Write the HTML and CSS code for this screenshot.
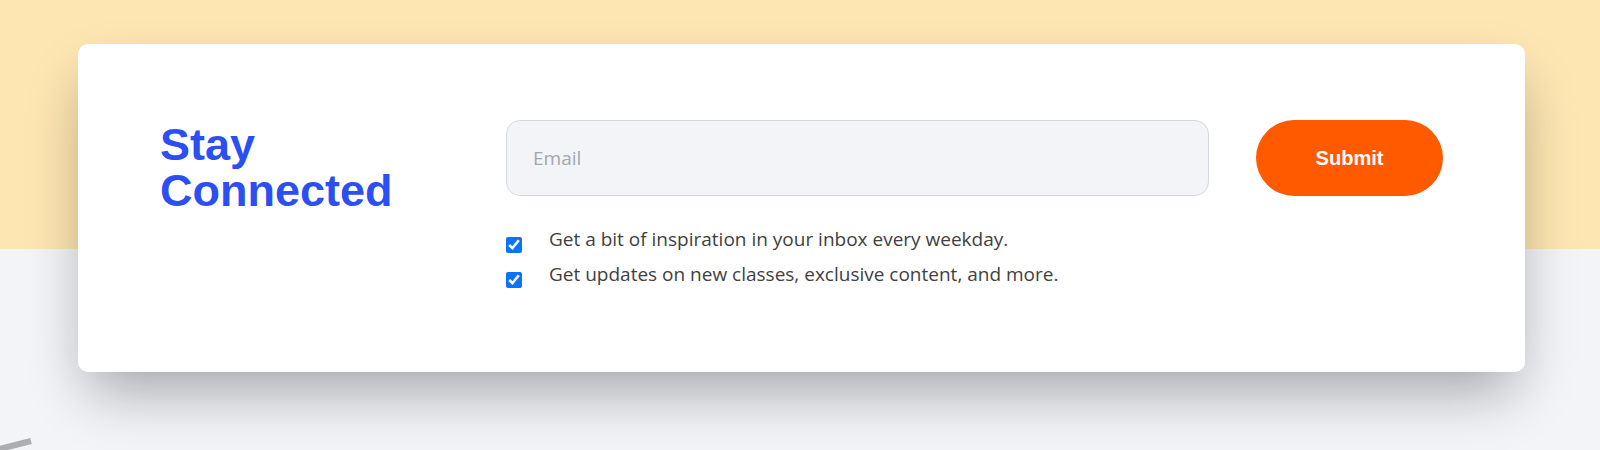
FILE: index.html
```html
<!DOCTYPE html>
<html lang="en">
<head>
<meta charset="utf-8">
<title>Stay Connected</title>
<link rel="stylesheet" href="styles.css">
</head>
<body>
  <main class="wrap">
    <section class="card">
      <h2 class="title">Stay<br>Connected</h2>
      <form class="form">
        <div class="row">
          <input class="email" type="email" placeholder="Email">
          <button class="submit" type="button">Submit</button>
        </div>
        <div class="checks">
          <label class="check"><input type="checkbox" checked><span>Get a bit of inspiration in your inbox every weekday.</span></label>
          <label class="check"><input type="checkbox" checked><span>Get updates on new classes, exclusive content, and more.</span></label>
        </div>
      </form>
    </section>
  </main>
  <svg class="deco" width="40" height="20" viewBox="0 0 40 20" aria-hidden="true">
    <path d="M-4 20 L31 11" fill="none" stroke="#acadb0" stroke-width="6" stroke-linecap="butt"/>
  </svg>
</body>
</html>
```

FILE: styles.css
```css
html, body {
  margin: 0;
  padding: 0;
}

body {
  min-height: 450px;
  background: linear-gradient(to bottom, #fde6b2 0, #fde6b2 249px, #f3f4f8 249px, #f3f4f8 100%);
  font-family: "Open Sans", "Noto Sans", sans-serif;
  overflow: hidden;
}

.wrap {
  padding: 44px 75px 0 78px;
}

.card {
  box-sizing: border-box;
  height: 328px;
  background: #ffffff;
  border-radius: 10px;
  box-shadow: 0 28px 55px -10px rgba(0, 0, 0, 0.33);
  padding: 76px 82px 0 82px;
  display: flex;
  align-items: flex-start;
}

.title {
  margin: 2px 0 0 0;
  width: 346px;
  flex: none;
  font-family: "Liberation Sans", Arial, sans-serif;
  font-weight: 700;
  font-size: 45px;
  line-height: 46px;
  color: #2b4ff3;
}

.form {
  flex: 1;
  margin: 0;
}

.row {
  display: flex;
  gap: 47px;
}

.email {
  flex: 1;
  box-sizing: border-box;
  height: 76px;
  padding: 0 26px;
  border: 1px solid #d5d8df;
  border-radius: 14px;
  background: #f3f4f8;
  font-family: "Open Sans", "Noto Sans", sans-serif;
  font-size: 19px;
  color: #333;
  outline: none;
}

.email::placeholder {
  color: #a4a7ae;
}

.submit {
  flex: none;
  width: 187px;
  height: 76px;
  border: none;
  border-radius: 38px;
  background: #ff5a00;
  color: #ffffff;
  font-family: "Liberation Sans", Arial, sans-serif;
  font-weight: 700;
  font-size: 20px;
  cursor: pointer;
}

.checks {
  margin-top: 26px;
  display: flex;
  flex-direction: column;
}

.check {
  display: flex;
  align-items: flex-start;
  gap: 27px;
  font-size: 19px;
  line-height: 35px;
  color: #3f3f3f;
}

.check input {
  margin: 15px 0 0 0;
  width: 16px;
  height: 16px;
  flex: none;
  accent-color: #0b74f6;
}

.deco {
  position: absolute;
  left: 0;
  top: 430px;
}
```
